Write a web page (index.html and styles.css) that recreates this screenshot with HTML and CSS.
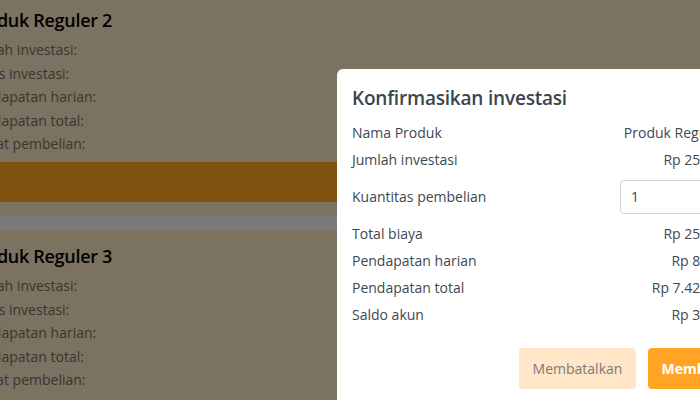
FILE: index.html
```html
<!DOCTYPE html>
<html lang="id">
<head>
<meta charset="utf-8">
<title>Konfirmasikan investasi</title>
<link rel="stylesheet" href="styles.css">
</head>
<body>
<div class="page">
  <div class="card">
    <h2 class="card-title">Produk Reguler 2</h2>
    <ul class="info">
      <li>Jumlah investasi:</li>
      <li>Siklus investasi:</li>
      <li>Pendapatan harian:</li>
      <li>Pendapatan total:</li>
      <li>Syarat pembelian:</li>
    </ul>
    <div class="buy-bar"></div>
  </div>
  <div class="separator"></div>
  <div class="card">
    <h2 class="card-title">Produk Reguler 3</h2>
    <ul class="info">
      <li>Jumlah investasi:</li>
      <li>Siklus investasi:</li>
      <li>Pendapatan harian:</li>
      <li>Pendapatan total:</li>
      <li>Syarat pembelian:</li>
    </ul>
  </div>
</div>
<div class="backdrop"></div>
<div class="modal">
  <h3 class="modal-title">Konfirmasikan investasi</h3>
  <div class="row"><span class="label">Nama Produk</span><span class="value">Produk Reguler 2</span></div>
  <div class="row"><span class="label">Jumlah investasi</span><span class="value">Rp 250.000</span></div>
  <div class="row row-input"><span class="label">Kuantitas pembelian</span><input class="qty" type="text" value="1"></div>
  <div class="row"><span class="label">Total biaya</span><span class="value">Rp 250.000</span></div>
  <div class="row"><span class="label">Pendapatan harian</span><span class="value">Rp 82.500</span></div>
  <div class="row"><span class="label">Pendapatan total</span><span class="value">Rp 7.425.000</span></div>
  <div class="row"><span class="label">Saldo akun</span><span class="value">Rp 37.000</span></div>
  <div class="actions">
    <button class="btn btn-cancel">Membatalkan</button>
    <button class="btn btn-confirm">Membeli</button>
  </div>
</div>
</body>
</html>
```
FILE: styles.css
```css
html, body {
  margin: 0;
  padding: 0;
}
body {
  width: 700px;
  height: 400px;
  overflow: hidden;
  background: #f8e4c4;
  font-family: "Open Sans", "Noto Sans", sans-serif;
  position: relative;
}
.page {
  margin-left: -32px;
  margin-top: -6px;
  width: 800px;
}
.card {
  padding: 14px 0 14px 0;
}
.card-title {
  margin: 0 0 6px 0;
  font-size: 18px;
  font-weight: 600;
  letter-spacing: -0.3px;
  line-height: 24px;
  color: #000;
}
.info {
  list-style: none;
  margin: 0;
  padding: 0;
}
.info li {
  font-size: 14px;
  line-height: 23.6px;
  color: #766b61;
}
.buy-bar {
  margin-top: 6px;
  height: 40px;
  background: #fea424;
}
.separator {
  height: 14px;
  background: #f4f4f4;
}
.backdrop {
  position: absolute;
  inset: 0;
  background: rgba(0, 0, 0, 0.5);
}
.modal {
  position: absolute;
  left: 337px;
  top: 69px;
  width: 384px;
  padding: 15px 15px 15px 15px;
  background: #fff;
  border-radius: 6px;
  color: #3d4852;
}
.modal-title {
  margin: 0 0 7px 0;
  font-size: 19px;
  font-weight: 600;
  letter-spacing: -0.2px;
  line-height: 28px;
  color: #3a4550;
}
.row {
  display: flex;
  justify-content: space-between;
  align-items: center;
  height: 27px;
  font-size: 14px;
}
.row-input {
  height: 47px;
}
.value {
  text-align: right;
}
.qty {
  box-sizing: border-box;
  width: 116px;
  height: 34px;
  border: 1px solid #ced4da;
  border-radius: 4px;
  padding: 0 10px;
  font: inherit;
  font-size: 14px;
  color: #3d4852;
  background: #fff;
}
.actions {
  display: flex;
  justify-content: flex-end;
  gap: 12px;
  margin-top: 20px;
}
.btn {
  height: 41px;
  border: none;
  border-radius: 4px;
  font-family: inherit;
  font-size: 14px;
  padding: 0;
}
.btn-cancel {
  width: 117px;
  background: #ffe6c6;
  color: #7a7a7a;
}
.btn-confirm {
  width: 88px;
  background: #ffa424;
  color: #fff;
  font-weight: 700;
}
```
